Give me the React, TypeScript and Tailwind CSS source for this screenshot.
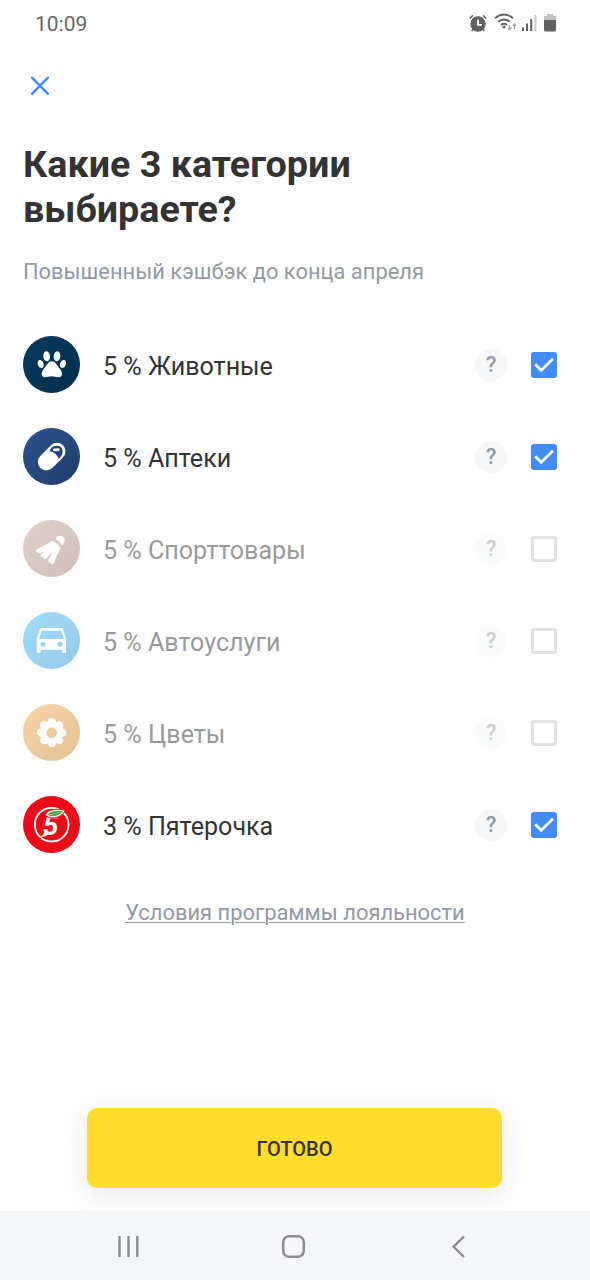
import { useState, type ReactNode } from 'react'
import clsx from 'clsx'

interface Category {
  id: string
  title: string
  background: string
  icon: ReactNode
}

const PawIcon = () => (
  <svg viewBox="0 0 171 171" className="size-full" fill="#fff">
    <ellipse cx="53" cy="84" rx="8.5" ry="12.5" transform="rotate(-18 53 84)" />
    <ellipse cx="71" cy="61" rx="10" ry="15" transform="rotate(-6 71 61)" />
    <ellipse cx="102" cy="61" rx="10" ry="15" transform="rotate(6 102 61)" />
    <ellipse cx="120" cy="84" rx="8.5" ry="12.5" transform="rotate(18 120 84)" />
    <path d="M86 76C97 76 101 87 107 94C113 101 117 107 117 114C117 121 112 124 106 124C99 124 94 121 86 121C78 121 73 124 67 124C60 124 56 121 56 114C56 107 60 101 66 94C72 87 76 76 86 76Z" />
  </svg>
)

const PillIcon = () => (
  <svg viewBox="0 0 171 171" className="size-full">
    <path d="M70 102L102 70" stroke="#fff" strokeWidth="51" strokeLinecap="round" />
    <path d="M79 70C82 61 89 54 100 53C111 52 120 60 119 72C118 81 113 87 107 93C104 82 92 71 79 70Z" fill="#264477" />
    <ellipse cx="100" cy="65" rx="10.5" ry="4.5" fill="#fff" transform="rotate(-4 100 65)" />
  </svg>
)

const ShuttlecockIcon = () => (
  <svg viewBox="0 0 171 171" className="size-full" fill="#fff">
    <path d="M98 56C102 46 115 44 122 52C128 60 124 72 116 76C112 67 106 60 98 56Z" />
    <g stroke="#fff" strokeWidth="8" strokeLinejoin="round">
      <path d="M43 92L88 67L93 71L50 97Z" />
      <path d="M58 106L92 74L99 79L67 113Z" />
      <path d="M79 122L101 83L108 84L88 128Z" />
      <path d="M88 68L100 74L108 86L94 80Z" />
    </g>
  </svg>
)

const CarIcon = () => (
  <svg viewBox="0 0 171 171" className="size-full" fill="#fff">
    <path
      fillRule="evenodd"
      d="M58 48H112C117 48 120 50 121 54L129 80V119Q129 123 125 123H121Q117 123 117 119V113H53V119Q53 123 49 123H45Q41 123 41 119V80L50 54C51 50 54 48 58 48ZM58 56Q56 56 55 59L48 81H123L116 59Q115 56 113 56ZM60 89A7.5 7.5 0 1 0 60 104A7.5 7.5 0 1 0 60 89ZM111 89A7.5 7.5 0 1 0 111 104A7.5 7.5 0 1 0 111 89Z"
    />
  </svg>
)

const FlowerIcon = () => (
  <svg viewBox="0 0 171 171" className="size-full" fill="#fff">
    {[0, 45, 90, 135, 180, 225, 270, 315].map(angle => (
      <ellipse key={angle} cx="86" cy="56" rx="13" ry="14" transform={`rotate(${angle} 86 86)`} />
    ))}
    <circle cx="86" cy="86" r="24" fill="none" stroke="#fff" strokeWidth="16" />
  </svg>
)

const PyaterochkaIcon = () => (
  <svg viewBox="0 0 171 171" className="size-full">
    <circle cx="86" cy="86" r="50.5" fill="none" stroke="#fff" strokeWidth="5.5" />
    <path d="M53 121Q64 126 76 115L63 107Q65 115 53 121Z" fill="#fff" />
    <text
      x="83"
      y="117"
      fill="#fff"
      textAnchor="middle"
      className="font-[Roboto,sans-serif] text-[84px] font-bold italic"
    >
      5
    </text>
    <path d="M66 58C75 38 100 38 127 42C119 62 91 75 66 58Z" fill="#fff" stroke="#ec0b18" strokeWidth="3" />
    <path d="M74 56C82 45 99 43 120 46C109 59 91 65 74 56Z" fill="#35a83b" />
    <path d="M77 56Q95 55 112 48" fill="none" stroke="#a7dc8b" strokeWidth="2" />
  </svg>
)

const categories: Category[] = [
  { id: 'pets', title: '5 % Животные', background: 'bg-linear-to-br from-[#063a5c] to-[#022d4c]', icon: <PawIcon /> },
  { id: 'pharmacy', title: '5 % Аптеки', background: 'bg-linear-to-br from-[#2c528c] to-[#203e6c]', icon: <PillIcon /> },
  { id: 'sport', title: '5 % Спорттовары', background: 'bg-linear-to-br from-[#e1cfc8] to-[#d0bfb9]', icon: <ShuttlecockIcon /> },
  { id: 'auto', title: '5 % Автоуслуги', background: 'bg-linear-to-br from-[#9fdcfa] to-[#97cae7]', icon: <CarIcon /> },
  { id: 'flowers', title: '5 % Цветы', background: 'bg-linear-to-br from-[#f9d5a5] to-[#e2c197]', icon: <FlowerIcon /> },
  { id: 'pyaterochka', title: '3 % Пятерочка', background: 'bg-[#ec0b18]', icon: <PyaterochkaIcon /> },
]

function StatusBar() {
  return (
    <div className="flex h-12 items-center justify-between pr-[32px] pl-[35px] text-[#666]">
      <span className="text-[21px] leading-none">10:09</span>
      <svg width="90" height="24" viewBox="468 12 90 24" fill="none">
        <circle cx="478" cy="24" r="7.7" fill="#606060" />
        <path d="M469.8 18.5L473 15.4M486.2 18.5L483 15.4M473.5 29L471.5 31M482.5 29L484.5 31" stroke="#606060" strokeWidth="1.6" />
        <path d="M478 19.5V24.8H482" stroke="#fff" strokeWidth="1.8" />
        <path d="M495 18.3Q504 10.8 513 18.3M498.2 21.8Q504 17 509.8 21.8M501 25Q504 22.6 507 25" stroke="#606060" strokeWidth="1.9" />
        <circle cx="504" cy="27" r="1.6" fill="#606060" />
        <path d="M509.5 25V29.8M507.7 27.7L509.5 29.8L511.3 27.7M514.5 29V24M512.7 26L514.5 24L516.3 26" stroke="#a5a5a5" strokeWidth="1.2" />
        <path d="M523 27.5V31M527 23.5V31M531.2 19V31" stroke="#606060" strokeWidth="2" />
        <path d="M535.5 15V31" stroke="#c8c8c8" strokeWidth="2" />
        <path d="M544 20V17Q544 16 545 16H547V14H553V16H555Q556 16 556 17V20Z" fill="#c0c0c0" />
        <path d="M544 20H556V30Q556 31.5 554.5 31.5H545.5Q544 31.5 544 30Z" fill="#606060" />
      </svg>
    </div>
  )
}

interface CategoryRowProps {
  category: Category
  checked: boolean
  disabled: boolean
  onToggle: () => void
}

function CategoryRow({ category, checked, disabled, onToggle }: CategoryRowProps) {
  return (
    <li className="flex h-[92px] items-center">
      <div className={clsx('mb-px size-[57px] shrink-0 rounded-full', category.background)}>{category.icon}</div>
      <span className={clsx('ml-[23px] pt-[3px] text-[25.1px] leading-none whitespace-nowrap', disabled ? 'text-[#999]' : 'text-[#333]')}>
        {category.title}
      </span>
      <button
        className={clsx(
          'mr-6 ml-auto flex size-8 items-center justify-center rounded-full text-[22px] leading-none font-medium',
          disabled ? 'bg-[#fafbfb] text-[#c9cccf]' : 'bg-[#f5f7f8] text-[#9299a2]'
        )}
      >
        ?
      </button>
      <button
        role="checkbox"
        aria-checked={checked}
        onClick={onToggle}
        className={clsx('size-[26px] rounded-[3px]', checked ? 'bg-[#428bf9]' : 'border-[3px] border-[#e1e1e1]')}
      >
        {checked && (
          <svg viewBox="0 0 26 26" className="size-full" fill="none">
            <path d="M4.2 12.2L10.2 18.3L22 6.7" stroke="#fff" strokeWidth="2.7" />
          </svg>
        )}
      </button>
    </li>
  )
}

export default function App() {
  const [selected, setSelected] = useState(['pets', 'pharmacy', 'pyaterochka'])

  const toggle = (id: string) => {
    if (selected.includes(id)) {
      setSelected(selected.filter(item => item !== id))
    } else if (selected.length < 3) {
      setSelected([...selected, id])
    }
  }

  return (
    <div className="flex h-[1280px] w-[590px] flex-col overflow-hidden bg-white font-[Roboto,sans-serif]">
      <StatusBar />
      <main className="flex flex-1 flex-col pr-[33px] pl-[23px]">
        <button className="mt-[27px] ml-[6px] size-[22px]">
          <svg viewBox="0 0 22 22" fill="none">
            <path d="M3 2.6L19 18.8M19 2.6L3 18.8" stroke="#4689ee" strokeWidth="2.5" strokeLinecap="round" />
          </svg>
        </button>
        <h1 className="mt-[45px] text-[37.7px] leading-[45px] font-bold text-[#333]">
          Какие 3 категории
          <br />
          выбираете?
        </h1>
        <p className="mt-[26px] text-[21.9px] leading-[28px] text-[#9299a2]">Повышенный кэшбэк до конца апреля</p>
        <ul className="mt-[33px]">
          {categories.map(category => {
            const checked = selected.includes(category.id)
            return (
              <CategoryRow
                key={category.id}
                category={category}
                checked={checked}
                disabled={!checked && selected.length >= 3}
                onToggle={() => toggle(category.id)}
              />
            )
          })}
        </ul>
        <a className="mt-[28px] ml-[10px] self-center text-[21.9px] leading-[28px] text-[#9299a2] underline decoration-1 underline-offset-[2px]">
          Условия программы лояльности
        </a>
        <button className="mt-auto mb-[23px] ml-[9px] h-20 w-[415px] self-center rounded-[10px] bg-[#ffdd2d] pt-px text-[20px] font-medium text-[#333] shadow-[0_6px_28px_rgba(0,0,0,0.1)]">
          ГОТОВО
        </button>
      </main>
      <nav className="h-[69px] shrink-0 bg-[#f5f6f8]">
        <svg width="590" height="69" viewBox="0 1211 590 69" fill="none" stroke="#8b8c8e">
          <path d="M119.5 1236V1257M128.5 1236V1257M137.3 1236V1257" strokeWidth="2.4" />
          <rect x="283.2" y="1236.2" width="20.6" height="20.6" rx="6" strokeWidth="2.5" />
          <path d="M464 1236.5L453.5 1246.7L464 1257" strokeWidth="2.4" />
        </svg>
      </nav>
    </div>
  )
}
